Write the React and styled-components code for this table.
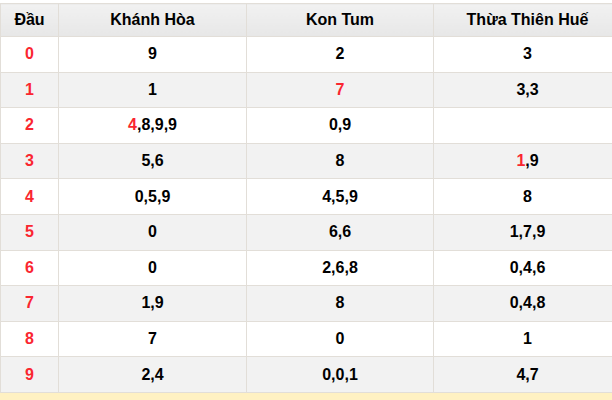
import styled, { createGlobalStyle } from "styled-components";

const GlobalStyle = createGlobalStyle`
  body {
    margin: 0;
    background: #fff;
    font-family: "Liberation Sans", Arial, sans-serif;
    overflow: hidden;
  }
`;

const rows = [
  ["0", [["9"]], [["2"]], [["3"]]],
  ["1", [["1"]], [["7", true]], [["3,3"]]],
  ["2", [["4", true], [",8,9,9"]], [["0,9"]], []],
  ["3", [["5,6"]], [["8"]], [["1", true], [",9"]]],
  ["4", [["0,5,9"]], [["4,5,9"]], [["8"]]],
  ["5", [["0"]], [["6,6"]], [["1,7,9"]]],
  ["6", [["0"]], [["2,6,8"]], [["0,4,6"]]],
  ["7", [["1,9"]], [["8"]], [["0,4,8"]]],
  ["8", [["7"]], [["0"]], [["1"]]],
  ["9", [["2,4"]], [["0,0,1"]], [["4,7"]]],
];

function App() {
  return (
    <>
      <GlobalStyle />
      <Wrapper>
        <Table>
          <colgroup>
            <col style={{ width: 58 }} />
            <col style={{ width: 188 }} />
            <col style={{ width: 187 }} />
            <col style={{ width: 188 }} />
          </colgroup>
          <thead>
            <tr>
              <Th>Đầu</Th>
              <Th>Khánh Hòa</Th>
              <Th>Kon Tum</Th>
              <Th>Thừa Thiên Huế</Th>
            </tr>
          </thead>
          <tbody>
            {rows.map(([head, ...cols], i) => (
              <Row key={head} $odd={i % 2 === 1}>
                <Td $red>{head}</Td>
                {cols.map((parts, j) => (
                  <Td key={j}>
                    {parts.map(([txt, red], k) =>
                      red ? <Red key={k}>{txt}</Red> : <span key={k}>{txt}</span>
                    )}
                  </Td>
                ))}
              </Row>
            ))}
          </tbody>
        </Table>
        <Footer />
      </Wrapper>
    </>
  );
}

export default App;

const Wrapper = styled.div`
  width: 621px;
  padding-top: 3px;
`;

const Table = styled.table`
  width: 621px;
  border-collapse: collapse;
  table-layout: fixed;
`;

const Th = styled.th`
  height: 32px;
  padding: 0;
  font-size: 16px;
  font-weight: bold;
  color: #000;
  text-align: center;
  border: 1px solid #e2ded8;
  background: linear-gradient(#f1f1f1, #e7e7e7);
`;

const Row = styled.tr`
  background: ${(p) => (p.$odd ? "#f2f2f2" : "#fff")};
`;

const Td = styled.td`
  height: 34.6px;
  padding: 0;
  font-size: 16px;
  font-weight: bold;
  text-align: center;
  color: ${(p) => (p.$red ? "#fa2630" : "#000")};
  border: 1px solid #e2ded8;
`;

const Red = styled.span`
  color: #fa2630;
`;

const Footer = styled.div`
  height: 20px;
  background: #fff1c2;
`;
